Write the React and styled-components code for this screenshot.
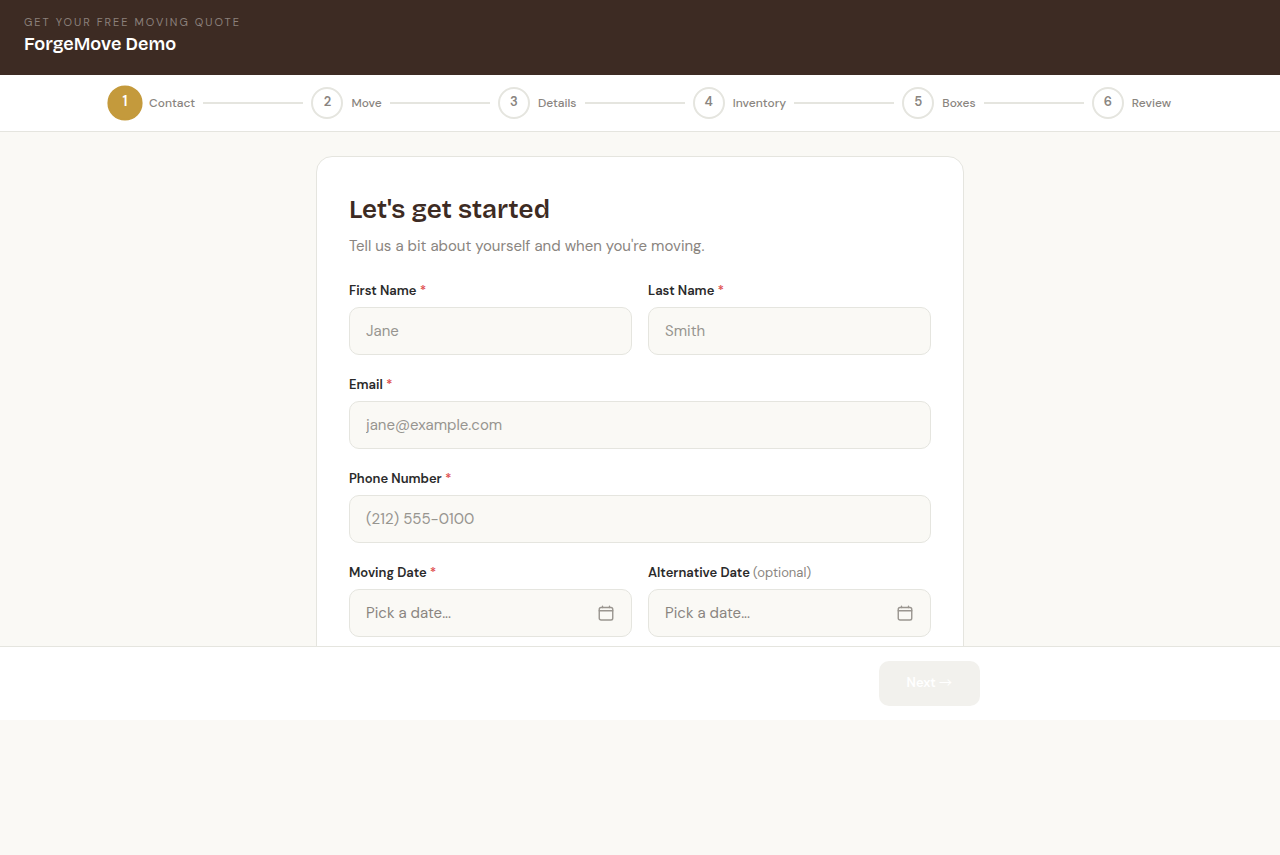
import { useState } from "react"
import styled, { createGlobalStyle } from "styled-components"

const GlobalStyle = createGlobalStyle`
  * {
    box-sizing: border-box;
  }
  body {
    margin: 0;
    background: #faf9f5;
    color: #2a2a2a;
    font-family: "DM Sans", Inter, sans-serif;
    -webkit-font-smoothing: antialiased;
  }
  button, input {
    font-family: inherit;
  }
`

const Wizard = styled.div`
  display: flex;
  flex-direction: column;
  height: 100vh;
  max-height: 720px;
`

const Header = styled.header`
  background: #3d2b23;
  padding: 14px 24px 16px;
`

const Tagline = styled.p`
  margin: 0;
  font-size: 11px;
  line-height: 16px;
  letter-spacing: 2px;
  text-transform: uppercase;
  color: #8b807b;
`

const Brand = styled.h1`
  margin: 0;
  font-family: "Bricolage Grotesque", Inter, sans-serif;
  font-size: 18px;
  line-height: 29px;
  font-weight: 600;
  color: #fff;
`

const Stepper = styled.nav`
  background: #fff;
  border-bottom: 1px solid #e5e5df;
  padding: 12px 24px;
`

const Steps = styled.ol`
  display: flex;
  align-items: center;
  gap: 8px;
  max-width: 1062px;
  margin: 0 auto;
  padding: 0;
  list-style: none;
`

const Step = styled.li`
  display: flex;
  align-items: center;
  gap: 8px;
  flex: ${({ $last }) => ($last ? "none" : "1 0 auto")};

  &:not(:last-child)::after {
    content: "";
    flex: 1;
    height: 2px;
    background: #e5e5df;
  }
`

const StepNumber = styled.span`
  display: flex;
  justify-content: center;
  width: 32px;
  height: 32px;
  border: 2px solid ${({ $active }) => ($active ? "#c49a3c" : "#e5e5df")};
  border-radius: 50%;
  background: ${({ $active }) => ($active ? "#c49a3c" : "#fff")};
  color: ${({ $active }) => ($active ? "#fff" : "#8a8580")};
  font-size: 13px;
  line-height: 26px;
  font-weight: 600;
  transform: ${({ $active }) => ($active ? "scale(1.1)" : "none")};
`

const StepLabel = styled.span`
  font-size: 12px;
  line-height: 16px;
  font-weight: 500;
  color: #8a8580;
`

const Main = styled.main`
  flex: 1;
  min-height: 0;
  overflow-y: auto;
  scrollbar-width: none;
  padding: 24px 16px;
`

const Card = styled.form`
  max-width: 648px;
  margin: 0 auto;
  padding: 32px;
  background: #fff;
  border: 1px solid #e5e5df;
  border-radius: 16px;
`

const Title = styled.h2`
  margin: 0 0 4px;
  font-family: "Bricolage Grotesque", Inter, sans-serif;
  font-size: 26px;
  line-height: 42px;
  font-weight: 600;
  color: #3d2b23;
`

const Subtitle = styled.p`
  margin: 0 0 24px;
  font-size: 15px;
  line-height: 22px;
  color: #8a8580;
`

const Fields = styled.div`
  display: grid;
  grid-template-columns: 1fr 1fr;
  gap: 20px 16px;
`

const Field = styled.div`
  display: flex;
  flex-direction: column;
  gap: 6px;
  grid-column: ${({ $wide }) => ($wide ? "1 / -1" : "auto")};
`

const Label = styled.label`
  font-size: 13px;
  line-height: 20px;
  font-weight: 600;
`

const Required = styled.span`
  color: #e05252;
`

const Optional = styled.span`
  font-weight: 400;
  color: #8a8580;
`

const Input = styled.input`
  width: 100%;
  height: 48px;
  padding: 0 16px;
  background: #faf9f5;
  border: 1px solid #e5e5df;
  border-radius: 10px;
  font-size: 15px;
  color: #2a2a2a;

  &::placeholder {
    color: #979590;
  }
`

const DateButton = styled.button`
  display: flex;
  align-items: center;
  justify-content: space-between;
  width: 100%;
  height: 48px;
  padding: 0 16px;
  background: #faf9f5;
  border: 1px solid #e5e5df;
  border-radius: 10px;
  font-size: 15px;
  color: #8a8580;
  cursor: pointer;
`

const Footer = styled.footer`
  background: #fff;
  border-top: 1px solid #e5e5df;
  padding: 14px 24px;
`

const Actions = styled.div`
  display: flex;
  justify-content: flex-end;
  max-width: 680px;
  margin: 0 auto;
`

const NextButton = styled.button`
  padding: 12px 28px 13px;
  border: none;
  border-radius: 10px;
  background: #f2f1ed;
  color: #fff;
  font-size: 13px;
  line-height: 20px;
  font-weight: 600;
`

const Arrow = styled.span`
  font-family: "Noto Sans CJK JP", sans-serif;
  font-weight: 400;
  line-height: 1;
`

const steps = ["Contact", "Move", "Details", "Inventory", "Boxes", "Review"]

const CalendarIcon = () => (
  <svg width="18" height="18" viewBox="0 0 18 18" fill="none" stroke="#9a9690" strokeWidth="1.4" strokeLinecap="round" aria-hidden="true">
    <rect x="2.25" y="3.5" width="13.5" height="12.5" rx="1.8" />
    <path d="M2.25 6.75h13.5M5.5 2.2V3.5M12.5 2.2V3.5" />
  </svg>
)

function TextField({ name, label, wide, ...rest }) {
  return (
    <Field $wide={wide}>
      <Label htmlFor={name}>{label} <Required>*</Required></Label>
      <Input id={name} name={name} {...rest} />
    </Field>
  )
}

function DateField({ name, label, required }) {
  return (
    <Field>
      <Label htmlFor={name}>
        {label} {required ? <Required>*</Required> : <Optional>(optional)</Optional>}
      </Label>
      <DateButton id={name} type="button">
        Pick a date...
        <CalendarIcon />
      </DateButton>
    </Field>
  )
}

export default function App() {
  const [values, setValues] = useState({ firstName: "", lastName: "", email: "", phone: "" })

  const handleChange = (e) => {
    const { name, value } = e.target
    setValues((prev) => ({ ...prev, [name]: value }))
  }

  return (
    <Wizard>
      <GlobalStyle />
      <Header>
        <Tagline>Get your free moving quote</Tagline>
        <Brand>ForgeMove Demo</Brand>
      </Header>
      <Stepper>
        <Steps>
          {steps.map((step, i) => (
            <Step key={step} $last={i === steps.length - 1}>
              <StepNumber $active={i === 0}>{i + 1}</StepNumber>
              <StepLabel>{step}</StepLabel>
            </Step>
          ))}
        </Steps>
      </Stepper>
      <Main>
        <Card>
          <Title>Let's get started</Title>
          <Subtitle>Tell us a bit about yourself and when you're moving.</Subtitle>
          <Fields>
            <TextField name="firstName" label="First Name" placeholder="Jane" value={values.firstName} onChange={handleChange} />
            <TextField name="lastName" label="Last Name" placeholder="Smith" value={values.lastName} onChange={handleChange} />
            <TextField wide type="email" name="email" label="Email" placeholder="jane@example.com" value={values.email} onChange={handleChange} />
            <TextField wide type="tel" name="phone" label="Phone Number" placeholder="(212) 555-0100" value={values.phone} onChange={handleChange} />
            <DateField name="movingDate" label="Moving Date" required />
            <DateField name="altDate" label="Alternative Date" />
          </Fields>
        </Card>
      </Main>
      <Footer>
        <Actions>
          <NextButton type="button" disabled>Next <Arrow>→</Arrow></NextButton>
        </Actions>
      </Footer>
    </Wizard>
  )
}
